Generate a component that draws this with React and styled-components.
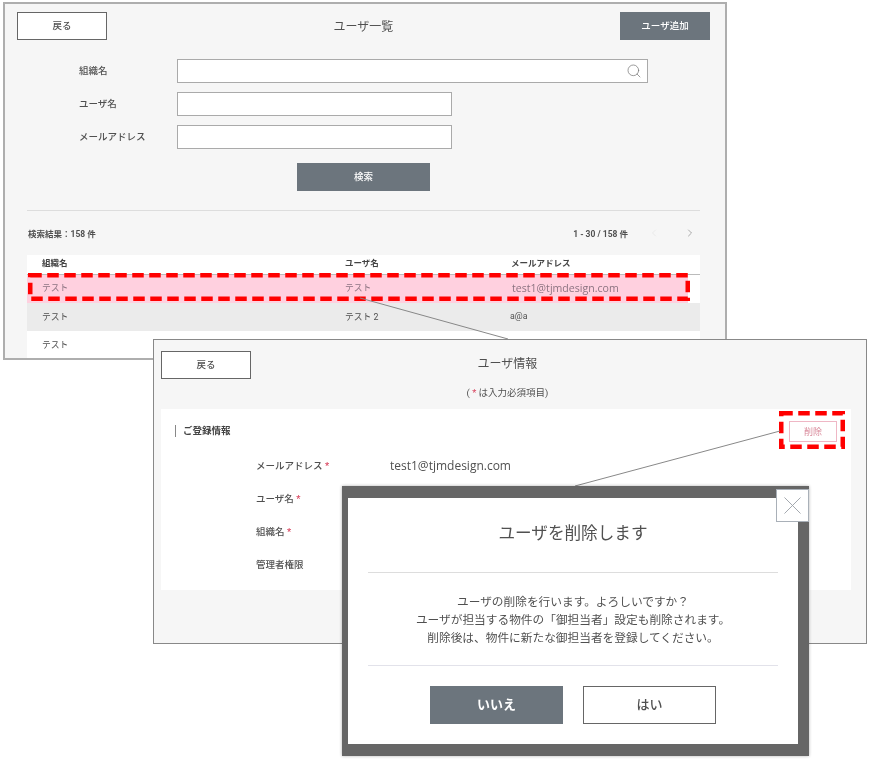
import styled, { createGlobalStyle } from 'styled-components';
import { Search, ChevronLeft, ChevronRight, X } from 'lucide-react';

const GlobalStyle = createGlobalStyle`
  html, body {
    margin: 0;
    background: #fff;
  }
  * {
    box-sizing: border-box;
  }
`;

const Canvas = styled.div`
  position: relative;
  width: 870px;
  height: 760px;
  overflow: hidden;
  background: #fff;
  color: #505050;
  font-family: Roboto, "Noto Sans CJK JP", sans-serif;
  font-size: 9.5px;
  filter: blur(0.35px);
`;

const Window = styled.section`
  position: absolute;
  left: ${(p) => p.$x}px;
  top: ${(p) => p.$y}px;
  width: ${(p) => p.$w}px;
  height: ${(p) => p.$h}px;
  border: ${(p) => p.$border};
  background: #f6f6f6;
  overflow: hidden;
`;

const TopBar = styled.header`
  display: grid;
  grid-template-columns: 90px 1fr 90px;
  align-items: center;
  height: 28px;
  margin: ${(p) => p.$margin};
`;

const Title = styled.h1`
  margin: 0;
  padding-bottom: ${(p) => p.$lift}px;
  text-align: center;
  font-size: 12px;
  font-weight: 400;
  color: #505050;
`;

const Button = styled.button`
  height: ${(p) => p.$h || 28}px;
  width: ${(p) => p.$w || 90}px;
  padding: 0 0 ${(p) => p.$lift || 2}px;
  border: 1px solid ${(p) => (p.$primary ? '#6c757d' : '#666')};
  border-radius: 0;
  background: ${(p) => (p.$primary ? '#6c757d' : '#fff')};
  color: ${(p) => (p.$primary ? '#fff' : '#505050')};
  font-family: inherit;
  font-size: ${(p) => p.$size || 9.5}px;
  font-weight: ${(p) => p.$weight || 500};
`;

const Form = styled.form`
  display: flex;
  flex-direction: column;
  gap: 9px;
  margin: 19px 0 0 74px;
`;

const FormRow = styled.div`
  display: flex;
  align-items: center;
`;

const Label = styled.label`
  width: 98px;
  padding-bottom: 2px;
  font-weight: 500;
  color: #505050;
`;

const InputWrap = styled.div`
  position: relative;
  width: ${(p) => p.$w}px;
`;

const Input = styled.input`
  display: block;
  width: 100%;
  height: 24px;
  border: 1px solid #aaa;
  background: #fff;
`;

const SearchIcon = styled(Search)`
  position: absolute;
  right: 6px;
  top: 4px;
  color: #777;
`;

const SearchButton = styled(Button)`
  display: block;
  margin: 14px 0 0 292px;
`;

const Divider = styled.hr`
  width: 673px;
  margin: 19px 0 0 22px;
  border: 0;
  border-top: 1px solid #ddd;
`;

const ResultBar = styled.div`
  display: flex;
  align-items: center;
  height: 16px;
  width: 673px;
  margin: 14px 0 0 22px;
  padding-left: 1px;
  font-size: 8.5px;
  font-weight: 700;
  color: #505050;
`;

const ResultCount = styled.span`
  margin-right: auto;
`;

const Pager = styled.div`
  display: flex;
  align-items: center;
  gap: 20px;
  margin-right: 4px;
`;

const PageIcons = styled.div`
  display: flex;
  align-items: center;
  gap: 24px;
`;

const Table = styled.div`
  width: 673px;
  margin: 14px 0 0 22px;
`;

const TableRow = styled.div`
  display: grid;
  grid-template-columns: 303px 166px 1fr;
  align-items: center;
  padding: 0 0 ${(p) => (p.$marked ? 4 : 2)}px 15px;
  height: ${(p) => p.$h}px;
  width: ${(p) => (p.$marked ? 661 : 673)}px;
  background: ${(p) => p.$bg};
  color: ${(p) => (p.$marked ? '#8d7482' : '#505050')};
  font-size: 8.8px;
`;

const HeadRow = styled(TableRow)`
  padding-bottom: 5px;
  font-size: 8.5px;
  font-weight: 700;
  color: #444;
  border-bottom: 1px solid #bbb;
  width: 673px;
`;

const MarkedRowWrap = styled.div`
  background: #fff;
`;

const Email = styled.span`
  padding: 2px 0 0 1px;
  font-family: "Open Sans", sans-serif;
  font-size: 10.6px;
`;

const SmallEmail = styled.span`
  margin-left: -1px;
`;

const Note = styled.p`
  margin: 6px 0 0;
  height: 16px;
  padding-right: 5px;
  line-height: 16px;
  text-align: center;
  font-size: 9.5px;
  color: #505050;
`;

const Star = styled.span`
  color: #d9455f;
`;

const Card = styled.div`
  height: 181px;
  margin: 8px 15px 0 7px;
  padding: 12px 14px;
  background: #fff;
`;

const CardHead = styled.div`
  display: flex;
  align-items: center;
  justify-content: space-between;
  height: 21px;
`;

const CardTitle = styled.h2`
  margin: 0 0 2px;
  padding-left: 7px;
  border-left: 1px solid #888;
  font-size: 9.5px;
  line-height: 12px;
  font-weight: 700;
  color: #444;
`;

const DeleteButton = styled.button`
  width: 48px;
  height: 21px;
  padding: 0;
  border: 1px solid #efb7c5;
  background: #fff;
  color: #d98a9b;
  font-family: inherit;
  font-size: 9px;
`;

const InfoList = styled.div`
  margin: 7px 0 0 81px;
`;

const InfoRow = styled.div`
  display: flex;
  align-items: center;
  height: 33px;
`;

const InfoLabel = styled.div`
  width: 134px;
  padding-bottom: 2px;
  font-weight: 500;
  color: #505050;
`;

const InfoValue = styled.div`
  font-family: "Open Sans", sans-serif;
  font-size: 12px;
  color: #505050;
`;

const Modal = styled.div`
  position: absolute;
  left: 342px;
  top: 486px;
  width: 467px;
  height: 270px;
  padding: 12px 11px 12px 6px;
  background: #666;
  box-shadow: 0 0 3px rgba(0, 0, 0, 0.3);
`;

const ModalBody = styled.div`
  height: 246px;
  padding: 0 20px;
  background: #fff;
`;

const ModalTitle = styled.h2`
  display: flex;
  align-items: center;
  justify-content: center;
  height: 75px;
  margin: 0;
  padding-bottom: 7px;
  border-bottom: 1px solid #ddd;
  font-size: 16.6px;
  font-weight: 400;
  color: #505050;
`;

const ModalMessage = styled.div`
  display: flex;
  flex-direction: column;
  justify-content: center;
  height: 93px;
  padding-top: 2px;
  border-bottom: 1px solid #e2e2ea;
  text-align: center;
  font-size: 11.7px;
  line-height: 18px;
  color: #505050;
`;

const ModalActions = styled.div`
  display: flex;
  justify-content: center;
  gap: 20px;
  padding-top: 20px;
`;

const CloseButton = styled.button`
  position: absolute;
  left: 434px;
  top: 3px;
  display: flex;
  align-items: center;
  justify-content: center;
  width: 33px;
  height: 33px;
  padding: 0;
  border: 1px solid #a9b0b8;
  background: #fff;
  color: #9aa0a6;
`;

const Connector = styled.svg`
  position: absolute;
  left: 0;
  top: 0;
`;

const Callout = styled.svg`
  position: absolute;
  left: ${(p) => p.$x}px;
  top: ${(p) => p.$y}px;
`;

function DashedMark({ x, y, w, h }) {
  return (
    <Callout $x={x} $y={y} width={w} height={h}>
      <rect
        x="2.25"
        y="2.25"
        width={w - 4.5}
        height={h - 4.5}
        fill="none"
        stroke="#ff0000"
        strokeWidth="4.5"
        strokeDasharray="11.5 5.5"
      />
    </Callout>
  );
}

function BackBar({ margin, title, lift, action }) {
  return (
    <TopBar $margin={margin}>
      <Button>戻る</Button>
      <Title $lift={lift}>{title}</Title>
      {action || <span />}
    </TopBar>
  );
}

function UserList() {
  return (
    <Window $x={3} $y={2} $w={724} $h={358} $border="2px solid #aeaeae">
      <BackBar
        margin="8px 15px 0 12px"
        title="ユーザ一覧"
        lift={2}
        action={<Button $primary>ユーザ追加</Button>}
      />
      <Form>
        <FormRow>
          <Label>組織名</Label>
          <InputWrap $w={471}>
            <Input />
            <SearchIcon size={16} strokeWidth={1.1} />
          </InputWrap>
        </FormRow>
        <FormRow>
          <Label>ユーザ名</Label>
          <InputWrap $w={275}>
            <Input />
          </InputWrap>
        </FormRow>
        <FormRow>
          <Label>メールアドレス</Label>
          <InputWrap $w={275}>
            <Input />
          </InputWrap>
        </FormRow>
      </Form>
      <SearchButton $primary $w={133}>検索</SearchButton>
      <Divider />
      <ResultBar>
        <ResultCount>検索結果：158 件</ResultCount>
        <Pager>
          <span>1 - 30 / 158 件</span>
          <PageIcons>
            <ChevronLeft size={12} strokeWidth={1} color="#ddd" />
            <ChevronRight size={12} strokeWidth={1.2} color="#777" />
          </PageIcons>
        </Pager>
      </ResultBar>
      <Table>
        <HeadRow $h={20} $bg="#fff">
          <span>組織名</span>
          <span>ユーザ名</span>
          <span>メールアドレス</span>
        </HeadRow>
        <MarkedRowWrap>
          <TableRow $h={28} $bg="#ffd0df" $marked>
            <span>テスト</span>
            <span>テスト</span>
            <Email>test1@tjmdesign.com</Email>
          </TableRow>
        </MarkedRowWrap>
        <TableRow $h={28} $bg="#ebebeb">
          <span>テスト</span>
          <span>テスト 2</span>
          <SmallEmail>a@a</SmallEmail>
        </TableRow>
        <TableRow $h={28} $bg="#fff">
          <span>テスト</span>
        </TableRow>
      </Table>
    </Window>
  );
}

function UserDetail() {
  return (
    <Window $x={153} $y={339} $w={714} $h={305} $border="1px solid #888">
      <BackBar margin="11px 12px 0 7px" title="ユーザ情報" lift={5} />
      <Note>(  <Star>*</Star> は入力必須項目)</Note>
      <Card>
        <CardHead>
          <CardTitle>ご登録情報</CardTitle>
          <DeleteButton>削除</DeleteButton>
        </CardHead>
        <InfoList>
          <InfoRow>
            <InfoLabel>メールアドレス <Star>*</Star></InfoLabel>
            <InfoValue>test1@tjmdesign.com</InfoValue>
          </InfoRow>
          <InfoRow>
            <InfoLabel>ユーザ名 <Star>*</Star></InfoLabel>
          </InfoRow>
          <InfoRow>
            <InfoLabel>組織名 <Star>*</Star></InfoLabel>
          </InfoRow>
          <InfoRow>
            <InfoLabel>管理者権限</InfoLabel>
          </InfoRow>
        </InfoList>
      </Card>
    </Window>
  );
}

function DeleteModal() {
  return (
    <Modal>
      <ModalBody>
        <ModalTitle>ユーザを削除します</ModalTitle>
        <ModalMessage>
          <div>ユーザの削除を行います。よろしいですか？</div>
          <div>ユーザが担当する物件の「御担当者」設定も削除されます。</div>
          <div>削除後は、物件に新たな御担当者を登録してください。</div>
        </ModalMessage>
        <ModalActions>
          <Button $primary $w={133} $h={38} $size={13} $weight={700} $lift={4}>いいえ</Button>
          <Button $w={133} $h={38} $size={13} $weight={500} $lift={4}>はい</Button>
        </ModalActions>
      </ModalBody>
      <CloseButton aria-label="閉じる">
        <X size={31} strokeWidth={0.7} />
      </CloseButton>
    </Modal>
  );
}

export default function App() {
  return (
    <Canvas>
      <GlobalStyle />
      <UserList />
      <DashedMark x={28} y={273} w={662} h={28} />
      <Connector width="870" height="760">
        <line x1="360" y1="298" x2="508" y2="339" stroke="#888" strokeWidth="1" />
      </Connector>
      <UserDetail />
      <DashedMark x={779} y={411} w={66} h={38} />
      <Connector width="870" height="760">
        <line x1="780" y1="431" x2="575" y2="486" stroke="#888" strokeWidth="1" />
      </Connector>
      <DeleteModal />
    </Canvas>
  );
}
